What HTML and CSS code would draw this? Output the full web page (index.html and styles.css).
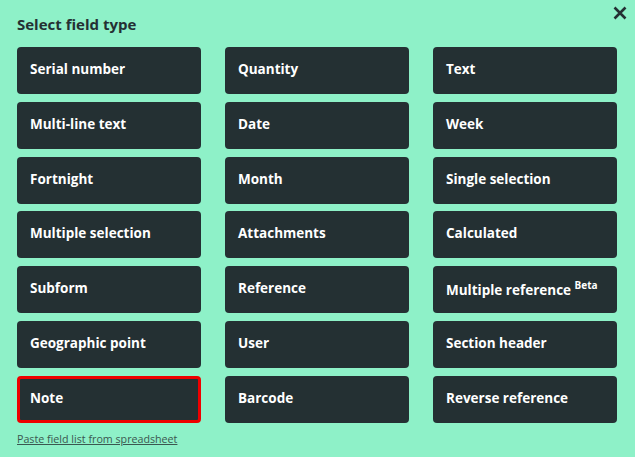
FILE: index.html
```html
<!DOCTYPE html>
<html>
<head>
    <meta charset="utf-8" />
    <title>Select field type</title>
    <link rel="stylesheet" href="styles.css">
</head>
<body>
    <div class="dialog">
        <div class="fejlec">
            <h2 class="cim">Select field type</h2>
            <button class="bezar" title="Close">
                <svg width="14" height="14" viewBox="0 0 14 14"><path d="M1.5 1.5 L12.5 12.5 M12.5 1.5 L1.5 12.5" stroke="#243033" stroke-width="2.6" fill="none"/></svg>
            </button>
        </div>
        <div class="mezok">
            <button class="mezo">Serial number</button>
            <button class="mezo">Quantity</button>
            <button class="mezo">Text</button>
            <button class="mezo">Multi-line text</button>
            <button class="mezo">Date</button>
            <button class="mezo">Week</button>
            <button class="mezo">Fortnight</button>
            <button class="mezo">Month</button>
            <button class="mezo">Single selection</button>
            <button class="mezo">Multiple selection</button>
            <button class="mezo">Attachments</button>
            <button class="mezo">Calculated</button>
            <button class="mezo">Subform</button>
            <button class="mezo">Reference</button>
            <button class="mezo">Multiple reference <sup>Beta</sup></button>
            <button class="mezo">Geographic point</button>
            <button class="mezo">User</button>
            <button class="mezo">Section header</button>
            <button class="mezo kivalasztott">Note</button>
            <button class="mezo">Barcode</button>
            <button class="mezo">Reverse reference</button>
        </div>
        <a class="link" href="#">Paste field list from spreadsheet</a>
    </div>
</body>
</html>
```

FILE: styles.css
```css
* {
    box-sizing: border-box;
}

html {
    background-color: #8ef1c8;
}

body {
    margin: 0;
    font-family: "Open Sans", "Liberation Sans", sans-serif;
    color: #243033;
}

.dialog {
    padding: 0 18px 0 17px;
}

.fejlec {
    display: flex;
    justify-content: space-between;
    align-items: flex-start;
    height: 47px;
}

.cim {
    margin: 14px 0 0 0;
    font-size: 15px;
    font-weight: 700;
}

.bezar {
    margin: 6px -10px 0 0;
    padding: 0;
    border: none;
    background: none;
    cursor: pointer;
}

.mezok {
    display: grid;
    grid-template-columns: repeat(3, 184px);
    column-gap: 24px;
    row-gap: 7.8px;
}

.mezo {
    height: 47px;
    padding: 0 13px 3px 13px;
    text-align: left;
    font-family: "Open Sans", "Liberation Sans", sans-serif;
    font-size: 13.5px;
    font-weight: 700;
    color: #ffffff;
    background-color: #243033;
    border: none;
    border-radius: 4px;
    cursor: pointer;
}

.mezo sup {
    font-size: 10px;
    vertical-align: 6px;
}

.kivalasztott {
    border: 3px solid #ee0000;
    padding: 0 10px 3px 10px;
}

.link {
    display: inline-block;
    margin-top: 9px;
    font-size: 10.7px;
    color: #3b5750;
}
```
